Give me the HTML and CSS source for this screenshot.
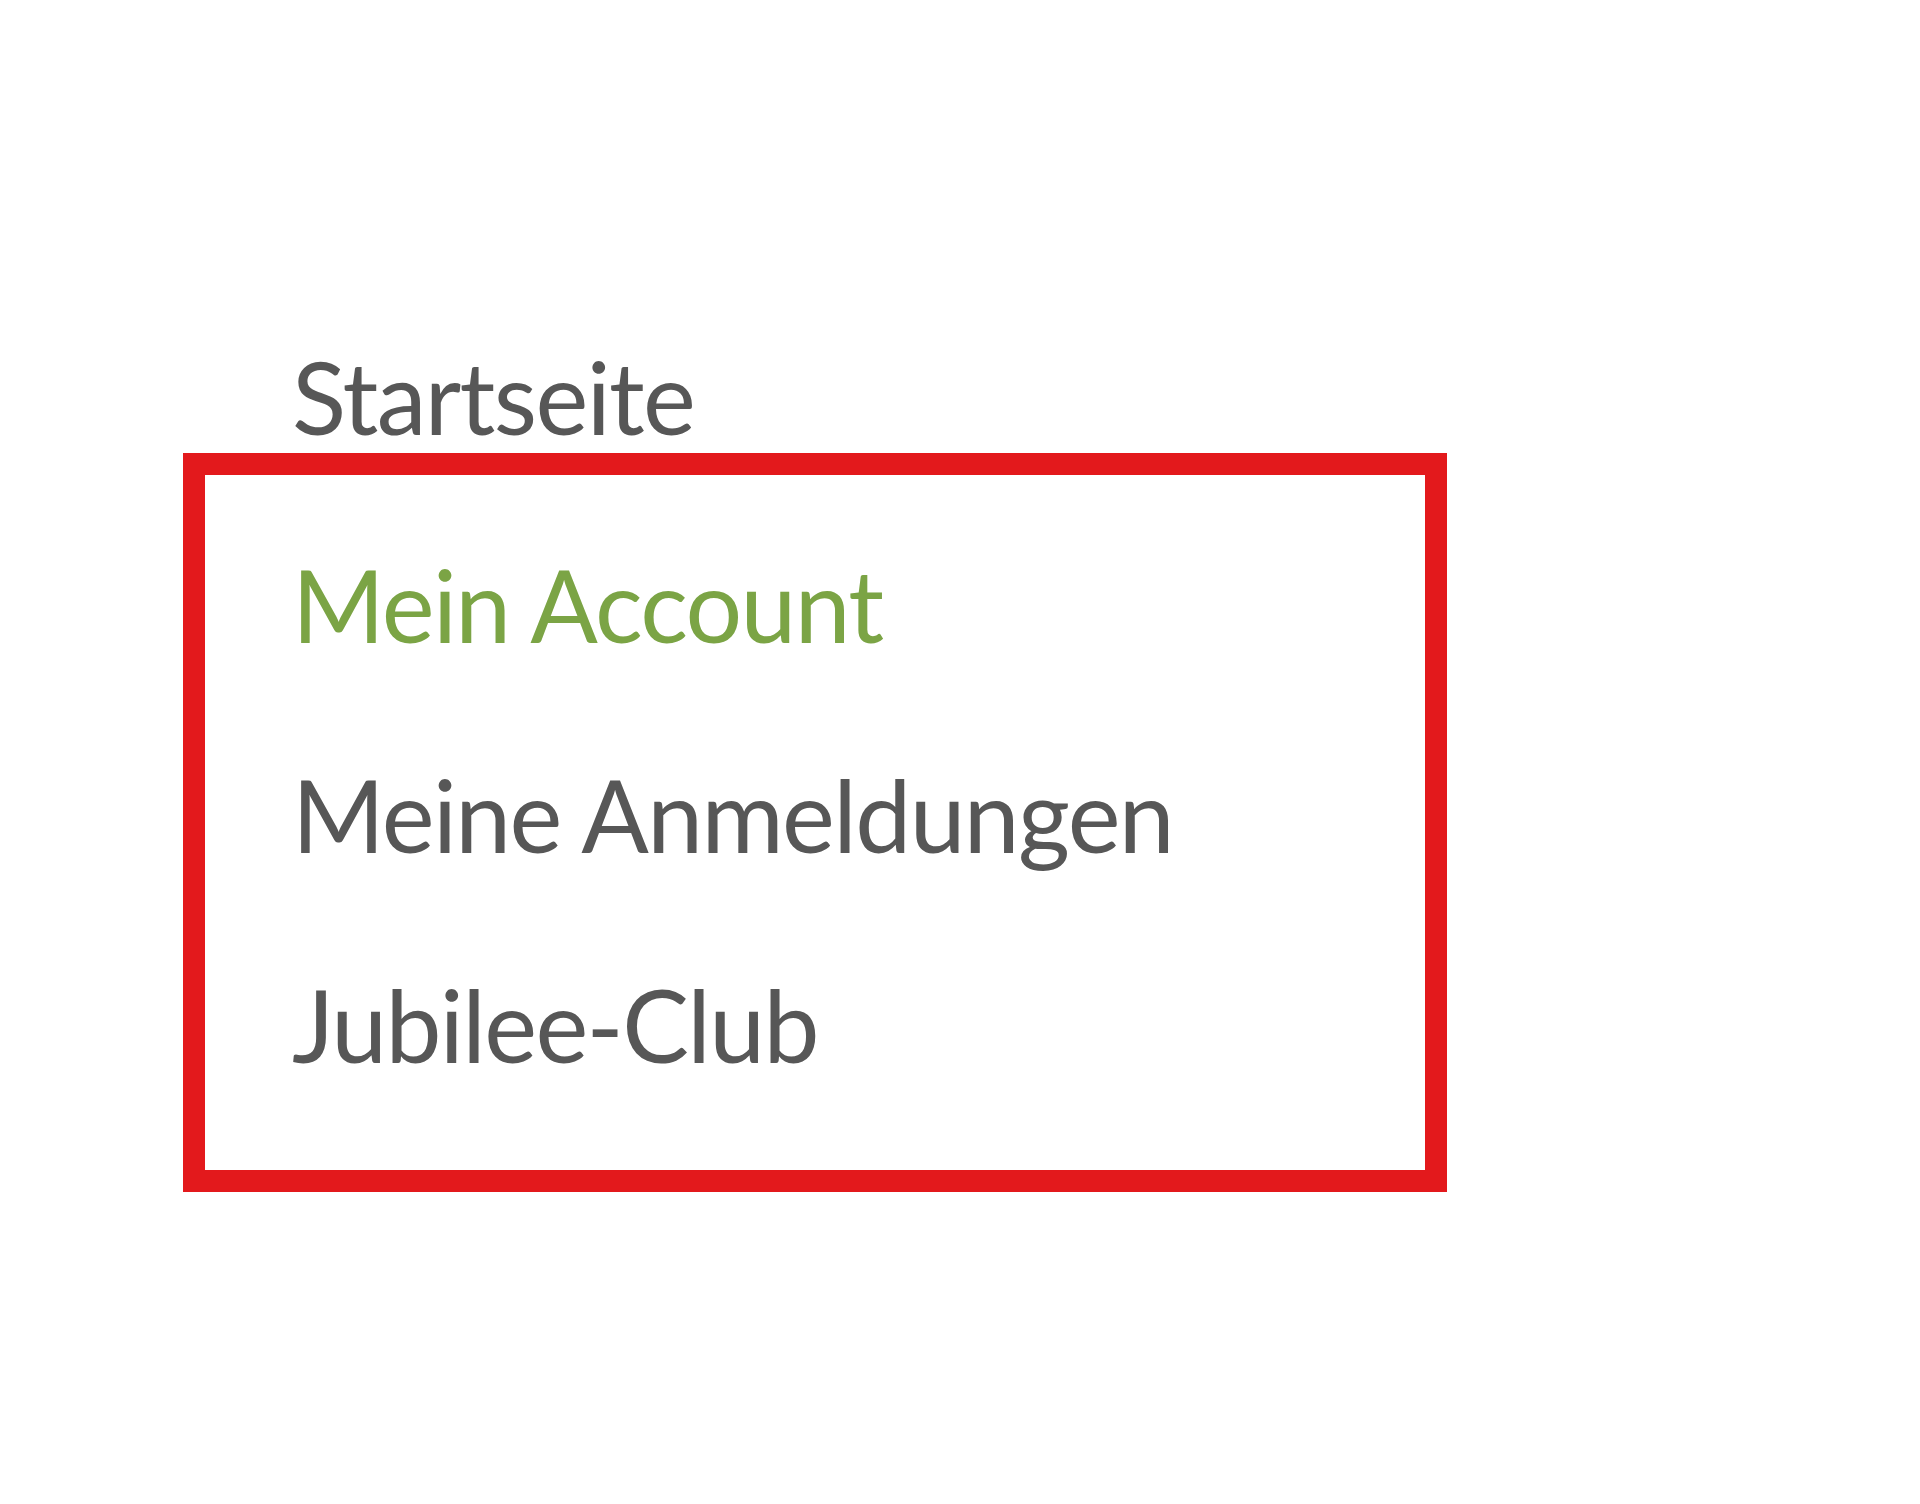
FILE: index.html
```html
<!DOCTYPE html>
<html lang="de">
<head>
<meta charset="utf-8">
<title>Navigation</title>
<link rel="stylesheet" href="styles.css">
</head>
<body>
<nav class="nav">
  <div class="nav-item">Startseite</div>
  <div class="nav-group">
    <div class="nav-item nav-item--active">Mein Account</div>
    <div class="nav-item">Meine Anmeldungen</div>
    <div class="nav-item">Jubilee-Club</div>
  </div>
</nav>
</body>
</html>
```
FILE: styles.css
```css
html, body {
  margin: 0;
  padding: 0;
  background: #ffffff;
}

.nav {
  padding: 336px 0 0 183px;
  font-family: "Lato", "Noto Sans", sans-serif;
  font-size: 100px;
  line-height: 120px;
  letter-spacing: -1.6px;
  color: #575757;
}

.nav-item {
  white-space: nowrap;
}

.nav > .nav-item {
  padding-left: 109px;
}

.nav-group {
  box-sizing: border-box;
  width: 1264px;
  margin-top: -3px;
  border: 22px solid #e3191c;
  padding: 69px 0 86px 87px;
  display: flex;
  flex-direction: column;
  gap: 90px;
}

.nav-item--active {
  color: #7ba445;
}
```
